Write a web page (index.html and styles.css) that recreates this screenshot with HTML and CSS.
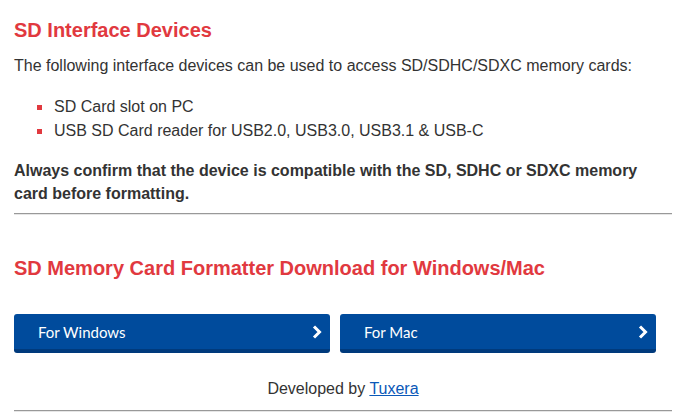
FILE: index.html
```html
<!DOCTYPE html>
<html>
<head>
<meta charset="utf-8">
<link rel="stylesheet" href="styles.css">
</head>
<body>
<div class="page">
  <h2 class="title first">SD Interface Devices</h2>
  <p class="intro">The following interface devices can be used to access SD/SDHC/SDXC memory cards:</p>
  <ul class="list">
    <li>SD Card slot on PC</li>
    <li>USB SD Card reader for USB2.0, USB3.0, USB3.1 &amp; USB-C</li>
  </ul>
  <p class="note">Always confirm that the device is compatible with the SD, SDHC or SDXC memory card before formatting.</p>
  <hr class="rule">
  <h2 class="title second">SD Memory Card Formatter Download for Windows/Mac</h2>
  <div class="buttons">
    <a class="btn" href="#">For Windows<svg class="chev" viewBox="0 0 10 14" width="10" height="14"><path d="M2 1.5 L7.5 7 L2 12.5" fill="none" stroke="#fff" stroke-width="3"/></svg></a>
    <a class="btn" href="#">For Mac<svg class="chev" viewBox="0 0 10 14" width="10" height="14"><path d="M2 1.5 L7.5 7 L2 12.5" fill="none" stroke="#fff" stroke-width="3"/></svg></a>
  </div>
  <p class="dev">Developed by <a href="#">Tuxera</a></p>
  <hr class="rule">
</div>
</body>
</html>
```

FILE: styles.css
```css
html, body {
  margin: 0;
  padding: 0;
  background: #fff;
}
.page {
  width: 658px;
  padding: 0 0 0 14px;
  font-family: "Liberation Sans", Arial, sans-serif;
  color: #333;
  font-size: 16px;
}
.title {
  color: #e1393f;
  font-size: 20px;
  font-weight: bold;
  margin: 0;
  line-height: 24px;
}
.title.first {
  padding-top: 18px;
}
.intro {
  margin: 12px 0 0 0;
  line-height: 24px;
}
.list {
  margin: 17px 0 0 0;
  padding: 0 0 0 40px;
  list-style: none;
  line-height: 24px;
}
.list li {
  position: relative;
}
.list li::before {
  content: "";
  position: absolute;
  left: -17px;
  top: 10px;
  width: 5px;
  height: 5px;
  background: #e1393f;
}
.note {
  margin: 16px 0 0 0;
  font-weight: bold;
  line-height: 23px;
}
.rule {
  margin: 8px 0 0 0;
  border: 0;
  border-top: 1px solid #999;
  border-bottom: 1px solid #e6e6e6;
  height: 0;
}
.title.second {
  margin-top: 41px;
}
.buttons {
  display: flex;
  gap: 10px;
  margin-top: 34px;
}
.btn {
  box-sizing: border-box;
  width: 316px;
  height: 39px;
  background: #004b9c;
  border-bottom: 4px solid #003a7c;
  border-radius: 3px;
  color: #fff;
  text-decoration: none;
  display: flex;
  align-items: center;
  justify-content: space-between;
  padding: 0 8px 0 24px;
  font-family: Lato, sans-serif;
  font-size: 15px;
}
.chev {
  display: block;
}
.dev {
  text-align: center;
  margin: 24px 0 0 0;
  line-height: 24px;
}
.dev a {
  color: #0a58b8;
}
.dev + .rule {
  margin-top: 9px;
}
```
